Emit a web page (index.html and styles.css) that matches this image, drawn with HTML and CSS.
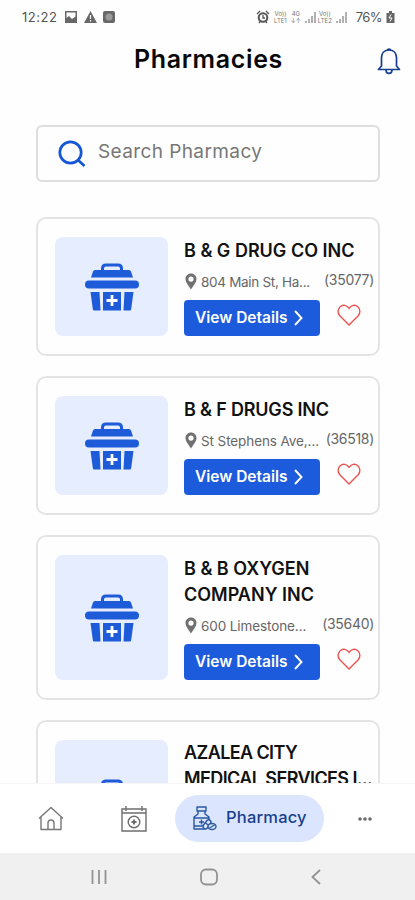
FILE: index.html
```html
<!DOCTYPE html>
<html lang="en">
<head>
  <meta charset="UTF-8">
  <meta name="viewport" content="width=device-width, initial-scale=1">
  <title>Pharmacies</title>
  <link rel="stylesheet" href="styles.css">
</head>
<body>
  <!-- Shared icons -->
  <svg class="sprite">
    <symbol id="basket" viewBox="0 0 54 48">
      <path d="M17.500 8V5.500Q17.500 2 21 2H33Q36.500 2 36.500 5.500V8" fill="none" stroke="#1d5bd8" stroke-width="3"/>
      <path d="M10 7H44Q45.500 7 46 8.500L48 14.500H6L8 8.500Q8.500 7 10 7Z" fill="#1d5bd8"/>
      <rect x="0" y="17.500" width="54" height="8" rx="4" fill="#1d5bd8"/>
      <path d="M5.500 29H14.500L15.500 47.500H9Q8 47.500 7.800 46Z M48.500 29H39.500L38.500 47.500H45Q46 47.500 46.200 46Z M18 29H36V47.500H18Z" fill="#1d5bd8"/>
      <path d="M27 32V43M21.500 37.500H32.500" stroke="#fff" stroke-width="2.800"/>
    </symbol>
    <symbol id="pin" viewBox="0 0 12 17">
      <path fill-rule="evenodd" d="M6 .5C2.700 .5 .5 3 .5 6C.5 9.500 4 13 6 16.500C8 13 11.500 9.500 11.500 6C11.500 3 9.300 .5 6 .5ZM6 3.500A2.600 2.600 0 1 1 6 8.700A2.600 2.600 0 1 1 6 3.500Z" fill="#707070"/>
    </symbol>
    <symbol id="heart" viewBox="0 0 24 22">
      <path d="M12 21L2.800 11.800C.4 9 .6 5 3.200 2.700C6 .4 10 1 12 4.500C14 1 18 .4 20.800 2.700C23.400 5 23.600 9 21.200 11.800Z" fill="none" stroke="#e9534f" stroke-width="1.400" stroke-linejoin="round"/>
    </symbol>
    <symbol id="chevron" viewBox="0 0 9 16">
      <path d="M1 1L7.500 8L1 15" fill="none" stroke="#fff" stroke-width="1.900"/>
    </symbol>
  </svg>

  <div class="status">
    <span class="clock">12:22</span>
    <svg width="54" height="14" viewBox="0 0 54 14" fill="#686868">
      <path fill-rule="evenodd" d="M1 1H13V13H1ZM2.500 2.500V8L5 6L8 9L11.500 6.500V2.500Z"/>
      <path d="M26.500 1L33 13H20Z"/>
      <path d="M26.500 5V9M26.500 10V11.500" stroke="#fff" stroke-width="1.200"/>
      <rect x="39" y="1" width="12" height="12" rx="2"/>
      <circle cx="45" cy="7" r="3.500" fill="#999"/>
    </svg>
    <div class="signals">
      <svg width="14" height="14" viewBox="0 0 14 14" fill="none" stroke="#555">
        <circle cx="7" cy="7.500" r="4.300" stroke-width="2"/>
        <path d="M1 4L4 1M13 4L10 1M3 13L4.500 11M11 13L9.500 11M7 5V8H9" stroke-width="1.300"/>
      </svg>
      <span class="net">Vo))<br>LTE1</span>
      <span class="net">4G<br>↓↑</span>
      <svg class="bars" width="11" height="12" viewBox="0 0 11 12"><path d="M1 12V10M4 12V8M7 12V5M10 12V1"/></svg>
      <span class="net net2">Vo))<br>LTE2</span>
      <svg class="bars" width="11" height="12" viewBox="0 0 11 12"><path d="M1 12V10M4 12V8M7 12V5M10 12V1"/></svg>
      <span class="percent">76%</span>
      <svg width="9" height="12" viewBox="0 0 9 12">
        <path d="M3 0H6V2H8.500V12H.5V2H3Z" fill="#666"/>
        <path d="M5 3.500L3 7H6L4 10.500" fill="none" stroke="#fff"/>
      </svg>
    </div>
  </div>

  <header class="header">
    <h1>Pharmacies</h1>
    <svg class="bell" width="24" height="27" viewBox="0 0 24 27" fill="none" stroke="#173f91" stroke-width="1.700">
      <path d="M4.500 18V9.500C4.500 5 7.500 2 12 2S19.500 5 19.500 9.500V18L22.500 21.500H1.500Z" stroke-linejoin="round"/>
      <path d="M10.500 2.200C10.500 .8 13.500 .8 13.500 2.200M9 22C9 26.500 15 26.500 15 22"/>
    </svg>
  </header>

  <div class="search">
    <svg width="28" height="28" viewBox="0 0 28 28" fill="none" stroke="#1556d4" stroke-width="2.700">
      <circle cx="12.500" cy="12.500" r="10.700"/>
      <path d="M20 20L26.500 26"/>
    </svg>
    <span>Search Pharmacy</span>
  </div>

  <main class="list">
    <article class="card">
      <div class="thumb"><svg><use href="#basket"/></svg></div>
      <div class="info">
        <h2>B &amp; G DRUG CO INC</h2>
        <div class="place">
          <svg class="pin"><use href="#pin"/></svg>
          <span class="address tight">804 Main St, Ha...</span>
          <span class="zip">(35077)</span>
        </div>
        <div class="actions">
          <a class="details"><span>View Details</span><svg><use href="#chevron"/></svg></a>
          <svg class="heart"><use href="#heart"/></svg>
        </div>
      </div>
    </article>

    <article class="card">
      <div class="thumb"><svg><use href="#basket"/></svg></div>
      <div class="info">
        <h2 class="snug">B &amp; F DRUGS INC</h2>
        <div class="place">
          <svg class="pin"><use href="#pin"/></svg>
          <span class="address">St Stephens Ave,...</span>
          <span class="zip">(36518)</span>
        </div>
        <div class="actions">
          <a class="details"><span>View Details</span><svg><use href="#chevron"/></svg></a>
          <svg class="heart"><use href="#heart"/></svg>
        </div>
      </div>
    </article>

    <article class="card">
      <div class="thumb"><svg><use href="#basket"/></svg></div>
      <div class="info">
        <h2>B &amp; B OXYGEN<br>COMPANY INC</h2>
        <div class="place">
          <svg class="pin"><use href="#pin"/></svg>
          <span class="address">600 Limestone...</span>
          <span class="zip">(35640)</span>
        </div>
        <div class="actions">
          <a class="details"><span>View Details</span><svg><use href="#chevron"/></svg></a>
          <svg class="heart"><use href="#heart"/></svg>
        </div>
      </div>
    </article>

    <article class="card">
      <div class="thumb"><svg><use href="#basket"/></svg></div>
      <div class="info">
        <h2 class="tight">AZALEA CITY<br>MEDICAL SERVICES I...</h2>
        <div class="place"></div>
        <div class="actions"></div>
      </div>
    </article>
  </main>

  <nav class="tabs">
    <svg class="home" width="26" height="25" viewBox="0 0 26 25" fill="none" stroke="#777" stroke-width="1.400" stroke-linejoin="round">
      <path d="M1 12.500L13 1.500L25 12.500M3 11V23.500H23V11M10 23.500V17C10 13 16 13 16 17V23.500"/>
    </svg>
    <svg class="calendar" width="26" height="26" viewBox="0 0 26 26" fill="none" stroke="#6e6e6e" stroke-width="1.400">
      <path d="M1 3H25V25H1ZM1 7H25M5 0V5M21 0V5"/>
      <circle cx="13" cy="16" r="5.800"/>
      <path d="M13 13.500V18.500M10.500 16H15.500" stroke-width="2"/>
    </svg>
    <a class="active">
      <svg width="25" height="25" viewBox="0 0 25 25" fill="none" stroke="#2857a0" stroke-width="1.400" stroke-linejoin="round">
        <path d="M5 1H14V5H5ZM6 5V8L2 11V23H12M13 5V8L17 11V14M2 12H17M2 20H11M9.500 13.500V18.500M7 16H12"/>
        <path d="M11.500 19L15 14.500C17 12.500 20 15 18.500 17.300L15.300 22C13 24.500 9.800 21.500 11.500 19ZM13.500 17L17 19.500"/>
        <ellipse cx="20" cy="20.500" rx="4" ry="3" fill="#dbe6fe"/>
        <path d="M17.500 22L22.500 19"/>
      </svg>
      <span>Pharmacy</span>
    </a>
    <svg class="more" width="14" height="4" viewBox="0 0 14 4" fill="#6b6b6b"><circle cx="2" cy="2" r="1.800"/><circle cx="7" cy="2" r="1.800"/><circle cx="12" cy="2" r="1.800"/></svg>
  </nav>

  <footer class="system">
    <svg width="16" height="16" viewBox="0 0 16 16"><path d="M1.500 1V15M8 1V15M14.500 1V15"/></svg>
    <svg width="18" height="18" viewBox="0 0 18 18"><rect x="1" y="1.500" width="16" height="15" rx="5"/></svg>
    <svg width="10" height="16" viewBox="0 0 10 16"><path d="M9 1L1.500 8L9 15"/></svg>
  </footer>
</body>
</html>
```

FILE: styles.css
```css
* {
  box-sizing: border-box;
}

body {
  margin: 0;
  height: 900px;
  display: flex;
  flex-direction: column;
  overflow: hidden;
  background: #fefefe;
  color: #111;
  font-family: Inter, "Open Sans", sans-serif;
}

h1, h2 {
  margin: 0;
  font-weight: 600;
}

svg {
  display: block;
  flex: none;
}

.sprite {
  position: absolute;
  width: 0;
  height: 0;
}

.status {
  height: 34px;
  padding: 0 20px 0 22px;
  display: flex;
  align-items: center;
  color: #555;
}

.clock {
  width: 36px;
  margin-right: 6px;
  font-size: 13px;
  letter-spacing: 0.5px;
  white-space: nowrap;
}

.signals {
  margin-left: auto;
  display: flex;
  align-items: center;
  gap: 4px;
}

.net {
  font-size: 6px;
  line-height: 7px;
  text-align: center;
  color: #777;
}

.net2 {
  margin-left: -2px;
}

.bars {
  stroke: #888;
  stroke-width: 1.3px;
}

.percent {
  margin-left: 5px;
  font-size: 13px;
  letter-spacing: -0.6px;
}

.header {
  height: 91px;
  padding: 10px 14px 0 134px;
  display: flex;
  justify-content: space-between;
  align-items: flex-start;
}

.header h1 {
  font-size: 25px;
  line-height: 30px;
  letter-spacing: 0.65px;
  color: #080808;
}

.bell {
  margin-top: 4px;
}

.search {
  flex: none;
  height: 57px;
  margin: 0 35px 35px 36px;
  padding-left: 20px;
  display: flex;
  align-items: center;
  gap: 12px;
  border: 2px solid #dedede;
  border-radius: 6px;
  color: #777;
  font-size: 19px;
  letter-spacing: 0.4px;
}

.search span {
  margin-top: -4px;
}

.list {
  flex: none;
  height: 566px;
  padding: 0 35px 0 36px;
  display: flex;
  flex-direction: column;
  gap: 20px;
  overflow: hidden;
}

.card {
  flex: none;
  padding: 18px 4px 18px 17px;
  display: flex;
  gap: 16px;
  border: 2px solid #e4e4e4;
  border-radius: 10px;
}

.thumb {
  flex: none;
  width: 113px;
  display: flex;
  align-items: center;
  justify-content: center;
  border-radius: 8px;
  background: #e6edff;
}

.thumb svg {
  width: 54px;
  height: 48px;
}

.info {
  flex: 1;
  min-width: 0;
}

.info h2 {
  padding-top: 1px;
  margin-bottom: -1px;
  font-size: 18px;
  line-height: 26px;
  white-space: nowrap;
}

.info h2.snug {
  letter-spacing: -0.18px;
}

.info h2.tight {
  padding-top: 0;
  margin-bottom: 0;
  letter-spacing: -0.6px;
}

.place {
  height: 37px;
  display: flex;
  align-items: center;
  color: #666;
  font-size: 13.500px;
  white-space: nowrap;
}

.pin {
  width: 12px;
  height: 17px;
  margin: 0 4px 0 1px;
}

.address {
  letter-spacing: -0.1px;
}

.address.tight {
  letter-spacing: -0.3px;
}

.zip {
  margin: -4px 0 0 auto;
  font-size: 14px;
  letter-spacing: -0.3px;
}

.actions {
  height: 36px;
  display: flex;
  gap: 17px;
}

.details {
  width: 136px;
  padding-left: 11px;
  display: flex;
  align-items: center;
  gap: 6px;
  border-radius: 4px;
  background: #1c5bdb;
  color: #fff;
  font-size: 15.500px;
  font-weight: 600;
  white-space: nowrap;
}

.details span {
  width: 93px;
  margin-top: -2px;
}

.details svg {
  width: 9px;
  height: 16px;
}

.heart {
  width: 24px;
  height: 22px;
  margin-top: 4px;
}

.tabs {
  flex: none;
  height: 70px;
  padding: 0 43px 0 38px;
  display: flex;
  align-items: center;
  border-top: 1px solid #f6f6f6;
  background: #fff;
}

.calendar {
  margin-left: 57px;
}

.active {
  width: 149px;
  height: 47px;
  margin: 0 auto 0 28px;
  padding-left: 17px;
  display: flex;
  align-items: center;
  gap: 9px;
  border-radius: 24px;
  background: #dbe6fe;
  color: #183e8d;
  font-size: 16.500px;
  font-weight: 500;
  letter-spacing: 0.2px;
}

.active span {
  margin-top: -3px;
}

.system {
  flex: 1;
  padding: 0 94px 0 91px;
  display: flex;
  align-items: center;
  justify-content: space-between;
  background: #f0f0f0;
}

.system svg {
  fill: none;
  stroke: #929292;
  stroke-width: 1.800px;
}
```
